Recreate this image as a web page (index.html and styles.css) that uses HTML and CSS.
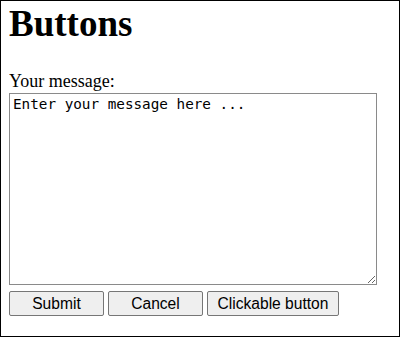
FILE: index.html
```html
<!DOCTYPE html>
<html>
<head>
<meta charset="utf-8">
<link rel="stylesheet" href="styles.css">
</head>
<body>
<h1 class="title">Buttons</h1>
<label class="label" for="msg">Your message:</label>
<textarea class="message" id="msg">Enter your message here ...</textarea>
<div class="actions">
  <button class="btn btn-submit">Submit</button>
  <button class="btn btn-cancel">Cancel</button>
  <button class="btn btn-click">Clickable button</button>
</div>
</body>
</html>
```
FILE: styles.css
```css
html {
  border: 1px solid #000;
  box-sizing: border-box;
  height: 100%;
}
body {
  margin: 0 8px;
  font-family: "Liberation Serif", "Times New Roman", serif;
  color: #000;
  background: #fff;
}
.title {
  font-size: 37px;
  font-weight: bold;
  margin: 2px 0 27px;
  line-height: 41px;
}
.label {
  display: block;
  font-size: 18px;
  line-height: 21px;
}
.message {
  display: block;
  box-sizing: border-box;
  width: 368px;
  height: 192px;
  margin: 1px 0 0;
  padding: 2px 3px;
  border: 1px solid #8a8a8a;
  font-family: "DejaVu Sans Mono", "Liberation Mono", monospace;
  font-size: 14.3px;
  color: #000;
}
.actions {
  display: flex;
  gap: 4px;
  margin-top: 6px;
}
.btn {
  box-sizing: border-box;
  height: 25px;
  padding: 0 6px;
  border: 1px solid #767676;
  border-radius: 2px;
  background: #efefef;
  font-family: "Liberation Sans", Arial, sans-serif;
  font-size: 15.6px;
  color: #000;
}
.btn-submit, .btn-cancel { width: 95px; }
.btn-click { width: 132px; }
```
